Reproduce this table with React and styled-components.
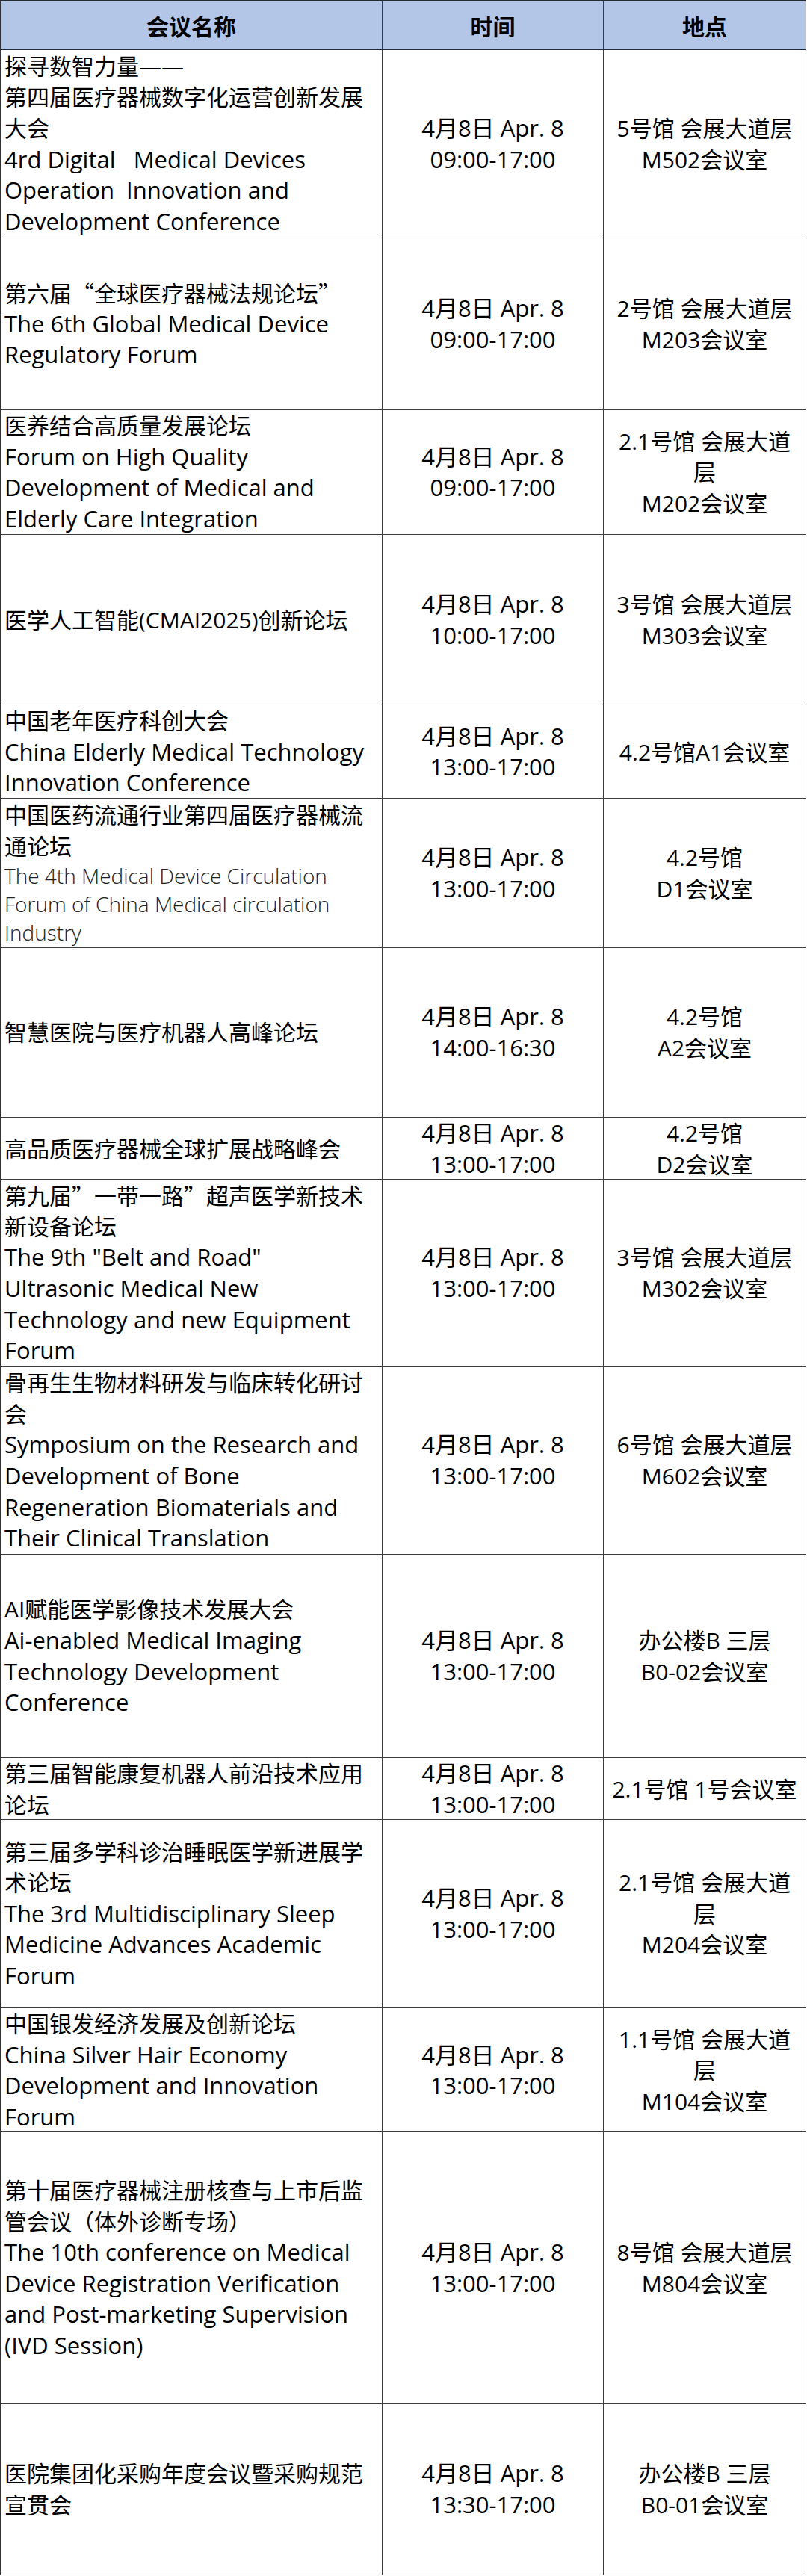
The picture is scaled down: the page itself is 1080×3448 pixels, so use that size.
import React from 'react';
import styled, { createGlobalStyle } from 'styled-components';

const Global = createGlobalStyle`
  html, body { margin: 0; padding: 0; background: #ffffff; }
  body {
    font-family: "Open Sans", "Noto Sans CJK SC", sans-serif;
    color: #000000;
  }
`;

const Table = styled.div`
  box-sizing: border-box;
  width: 1079px;
  border-left: 1px solid #333333;
  border-right: 1px solid #333333;
  border-top: 2px solid #1f2a36;
`;

const Row = styled.div`
  box-sizing: border-box;
  display: grid;
  grid-template-columns: 511px 296px 270px;
  height: ${(p) => p.$h}px;
  border-bottom: 1px solid ${(p) => (p.$head ? '#1f2a36' : '#3c3c3c')};
  background: ${(p) => (p.$head ? '#b4c6e7' : '#ffffff')};
`;

const Cell = styled.div`
  box-sizing: border-box;
  display: flex;
  flex-direction: column;
  justify-content: center;
  align-items: ${(p) => (p.$left ? 'flex-start' : 'center')};
  text-align: ${(p) => (p.$left ? 'left' : 'center')};
  padding: ${(p) => (p.$left ? '0 0 0 5px' : '0')};
  border-right: ${(p) => (p.$last ? 'none' : '1px solid #3c3c3c')};
  overflow: visible;
`;

const HeadText = styled.div`
  font-family: "Noto Sans CJK SC", sans-serif;
  font-weight: 700;
  font-size: 30px;
  line-height: 40px;
  color: #000;
`;

const sizes = {
  zh: { fs: 30, lh: 41.6, w: 400, c: '#000', f: '"Open Sans", "Noto Sans CJK SC", sans-serif' },
  zq: { fs: 30, lh: 41.6, w: 400, c: '#000', f: '"Noto Sans CJK SC", sans-serif' },
  en: { fs: 31, lh: 41.6, w: 400, c: '#000', f: '"Open Sans", "Noto Sans CJK SC", sans-serif' },
  sm: { fs: 28, lh: 38, w: 300, c: '#222', f: '"Open Sans", "Noto Sans CJK SC", sans-serif' },
};

const Line = styled.div`
  white-space: pre;
  font-family: ${(p) => sizes[p.$k].f};
  font-size: ${(p) => sizes[p.$k].fs}px;
  line-height: ${(p) => sizes[p.$k].lh}px;
  font-weight: ${(p) => sizes[p.$k].w};
  color: ${(p) => sizes[p.$k].c};
`;

const z = (t) => ['zh', t];
const q = (t) => ['zq', t];
const e = (t) => ['en', t];
const s = (t) => ['sm', t];

const time = (t) => [e('4月8日 Apr. 8'), e(t)];

const rows = [
  {
    h: 252,
    name: [
      z('探寻数智力量——'),
      z('第四届医疗器械数字化运营创新发展'),
      z('大会'),
      e('4rd Digital   Medical Devices'),
      e('Operation  Innovation and'),
      e('Development Conference'),
    ],
    time: time('09:00-17:00'),
    place: [z('5号馆 会展大道层'), z('M502会议室')],
  },
  {
    h: 230,
    name: [
      q('第六届“全球医疗器械法规论坛”'),
      e('The 6th Global Medical Device'),
      e('Regulatory Forum'),
    ],
    time: time('09:00-17:00'),
    place: [z('2号馆 会展大道层'), z('M203会议室')],
  },
  {
    h: 167,
    name: [
      z('医养结合高质量发展论坛'),
      e('Forum on High Quality'),
      e('Development of Medical and'),
      e('Elderly Care Integration'),
    ],
    time: time('09:00-17:00'),
    place: [z('2.1号馆 会展大道'), z('层'), z('M202会议室')],
  },
  {
    h: 228,
    name: [z('医学人工智能(CMAI2025)创新论坛')],
    time: time('10:00-17:00'),
    place: [z('3号馆 会展大道层'), z('M303会议室')],
  },
  {
    h: 125,
    name: [
      z('中国老年医疗科创大会'),
      e('China Elderly Medical Technology'),
      e('Innovation Conference'),
    ],
    time: time('13:00-17:00'),
    place: [z('4.2号馆A1会议室')],
  },
  {
    h: 200,
    name: [
      z('中国医药流通行业第四届医疗器械流'),
      z('通论坛'),
      s('The 4th Medical Device Circulation'),
      s('Forum of China Medical circulation'),
      s('Industry'),
    ],
    time: time('13:00-17:00'),
    place: [z('4.2号馆'), z('D1会议室')],
  },
  {
    h: 227,
    name: [z('智慧医院与医疗机器人高峰论坛')],
    time: time('14:00-16:30'),
    place: [z('4.2号馆'), z('A2会议室')],
  },
  {
    h: 83,
    name: [z('高品质医疗器械全球扩展战略峰会')],
    time: time('13:00-17:00'),
    place: [z('4.2号馆'), z('D2会议室')],
  },
  {
    h: 251,
    name: [
      q('第九届”一带一路”超声医学新技术'),
      z('新设备论坛'),
      e('The 9th "Belt and Road"'),
      e('Ultrasonic Medical New'),
      e('Technology and new Equipment'),
      e('Forum'),
    ],
    time: time('13:00-17:00'),
    place: [z('3号馆 会展大道层'), z('M302会议室')],
  },
  {
    h: 251,
    name: [
      z('骨再生生物材料研发与临床转化研讨'),
      z('会'),
      e('Symposium on the Research and'),
      e('Development of Bone'),
      e('Regeneration Biomaterials and'),
      e('Their Clinical Translation'),
    ],
    time: time('13:00-17:00'),
    place: [z('6号馆 会展大道层'), z('M602会议室')],
  },
  {
    h: 272,
    name: [
      z('AI赋能医学影像技术发展大会'),
      e('Ai-enabled Medical Imaging'),
      e('Technology Development'),
      e('Conference'),
    ],
    time: time('13:00-17:00'),
    place: [z('办公楼B 三层'), z('B0-02会议室')],
  },
  {
    h: 83,
    name: [z('第三届智能康复机器人前沿技术应用'), z('论坛')],
    time: time('13:00-17:00'),
    place: [z('2.1号馆 1号会议室')],
  },
  {
    h: 252,
    name: [
      z('第三届多学科诊治睡眠医学新进展学'),
      z('术论坛'),
      e('The 3rd Multidisciplinary Sleep'),
      e('Medicine Advances Academic'),
      e('Forum'),
    ],
    time: time('13:00-17:00'),
    place: [z('2.1号馆 会展大道'), z('层'), z('M204会议室')],
  },
  {
    h: 166,
    name: [
      z('中国银发经济发展及创新论坛'),
      e('China Silver Hair Economy'),
      e('Development and Innovation'),
      e('Forum'),
    ],
    time: time('13:00-17:00'),
    place: [z('1.1号馆 会展大道'), z('层'), z('M104会议室')],
  },
  {
    h: 364,
    name: [
      z('第十届医疗器械注册核查与上市后监'),
      q('管会议（体外诊断专场）'),
      e('The 10th conference on Medical'),
      e('Device Registration Verification'),
      e('and Post-marketing Supervision'),
      e('(IVD Session)'),
    ],
    time: time('13:00-17:00'),
    place: [z('8号馆 会展大道层'), z('M804会议室')],
  },
  {
    h: 229,
    name: [z('医院集团化采购年度会议暨采购规范'), z('宣贯会')],
    time: time('13:30-17:00'),
    place: [z('办公楼B 三层'), z('B0-01会议室')],
  },
];

const Lines = ({ items }) =>
  items.map(([k, t], i) => (
    <Line key={i} $k={k}>
      {t}
    </Line>
  ));

export default function App() {
  return (
    <>
      <Global />
      <Table>
        <Row $h={65} $head>
          <Cell>
            <HeadText>会议名称</HeadText>
          </Cell>
          <Cell>
            <HeadText>时间</HeadText>
          </Cell>
          <Cell $last>
            <HeadText>地点</HeadText>
          </Cell>
        </Row>
        {rows.map((r, i) => (
          <Row key={i} $h={r.h}>
            <Cell $left>
              <Lines items={r.name} />
            </Cell>
            <Cell>
              <Lines items={r.time} />
            </Cell>
            <Cell $last>
              <Lines items={r.place} />
            </Cell>
          </Row>
        ))}
      </Table>
    </>
  );
}
